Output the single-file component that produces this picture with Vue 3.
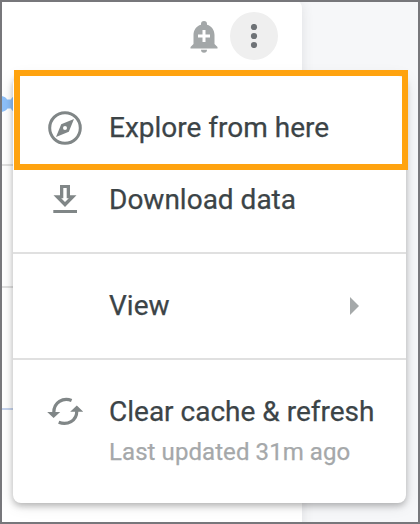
<script setup>
import { ref } from 'vue'

const lastUpdated = ref('31m ago')
const gridLines = ref(['grey', 'grey', 'blue'])
</script>

<template>
  <div class="page">
    <div class="card">
      <div class="toolbar">
        <svg class="bell" viewBox="0 0 28 32">
          <path d="M14 0a3 3 0 0 1 3 3v.7c4.700 1.300 7.500 5.200 7.500 10.300v9l3 3v1.500H.5V26l3-3v-9C3.500 8.900 6.300 5 11 3.700V3a3 3 0 0 1 3-3z" />
          <path d="M11 28.700h6a3 3 0 0 1-6 0z" />
          <path class="plus" d="M12.500 9h3v4.500H20v3h-4.500V21h-3v-4.500H8v-3h4.500z" />
        </svg>
        <button class="more">
          <svg width="24" height="24" viewBox="0 0 24 24">
            <circle cx="12" cy="3" r="3.100" />
            <circle cx="12" cy="12" r="3.100" />
            <circle cx="12" cy="21" r="3.100" />
          </svg>
        </button>
      </div>
      <div class="chart">
        <svg class="series" width="14" height="18" viewBox="0 0 14 18">
          <path d="M0 1c4 0 6 1.500 7 3.500h4c.8-1.800 1.500-2.500 3-3v15c-1.500-.5-2.200-1.200-3-3H7.500C6 15.500 4 17 0 17z" />
        </svg>
        <div v-for="(line, i) in gridLines" :key="i" class="grid-line" :class="line"></div>
      </div>
    </div>

    <div class="menu">
      <div class="group">
        <div class="item">
          <svg class="icon" viewBox="0 0 36 36">
            <circle cx="18" cy="18" r="15.300" fill="none" stroke="#808687" stroke-width="3" />
            <path fill-rule="evenodd" d="M27 9l-5.200 12.800L9 27l5.200-12.800zM18 16a2 2 0 1 0 0 4 2 2 0 0 0 0-4z" />
          </svg>
          <span class="label">Explore from here</span>
        </div>
        <div class="item">
          <svg class="icon" viewBox="0 0 36 36">
            <path fill-rule="evenodd" d="M13 3h10v10.300h6.500L18 25 6.500 13.300H13zM16.300 6v10.300h-2.100L18 20l3.800-3.700h-2.100V6z" />
            <path d="M6.300 28h23.700v3H6.300z" />
          </svg>
          <span class="label">Download data</span>
        </div>
      </div>
      <div class="group">
        <div class="item">
          <span class="icon"></span>
          <span class="label">View</span>
          <svg class="arrow" width="9" height="18" viewBox="0 0 9 18">
            <path d="M0 0l9 9-9 9z" />
          </svg>
        </div>
      </div>
      <div class="group last">
        <div class="item">
          <svg class="icon" viewBox="0 0 36 36">
            <path class="arc" d="M24.600 6.500C16 3 6.800 8.500 6.800 18.500" />
            <path class="arc" d="M11.700 28.300C20.500 31.500 29.800 27 29.800 17" />
            <path d="M.2 18h13L6.600 24zM23.200 17.700h13L29.800 11.600z" />
          </svg>
          <span class="label">Clear cache &amp; refresh</span>
        </div>
        <div class="updated">Last updated {{ lastUpdated }}</div>
      </div>
    </div>

    <div class="highlight"></div>
    <div class="frame"></div>
  </div>
</template>

<style>
body {
  margin: 0;
}
</style>

<style scoped>
.page {
  position: relative;
  width: 420px;
  height: 524px;
  box-sizing: border-box;
  overflow: hidden;
  background: #f6f7f9;
  font-family: Roboto, Arial, sans-serif;
}
.card {
  width: 302px;
  height: 540px;
  padding-top: 2px;
  box-sizing: border-box;
  background: #fff;
  border-radius: 0 8px 0 0;
  box-shadow: 0 2px 12px rgba(60, 64, 67, 0.13);
}
.toolbar {
  display: flex;
  justify-content: flex-end;
  align-items: center;
  padding: 10px 24px 0 0;
}
.bell {
  width: 28px;
  height: 32px;
  margin: 2px 12px 0 0;
  fill: #a3a7a8;
}
.plus {
  fill: #fff;
}
.more {
  display: flex;
  align-items: center;
  justify-content: center;
  width: 48px;
  height: 48px;
  margin: 0;
  padding: 0;
  border: none;
  border-radius: 50%;
  background: #efefef;
  fill: #6e7276;
}
.chart {
  padding-top: 35px;
}
.series {
  display: block;
  margin-bottom: 51px;
  fill: #8dc0fa;
}
.grid-line {
  height: 2px;
  margin-bottom: 120px;
  background: #e0e0e0;
}
.grid-line.blue {
  background: #c5d3ed;
}
.menu {
  position: absolute;
  left: 13px;
  top: 76px;
  width: 393px;
  height: 427px;
  background: #fff;
  border-radius: 8px;
  box-shadow: 0 3px 6px rgba(0, 0, 0, 0.24), 0 2px 16px rgba(0, 0, 0, 0.1);
}
.group {
  padding: 16px 0;
  border-bottom: 2px solid #e0e0e0;
}
.group.last {
  border-bottom: none;
}
.item {
  display: flex;
  align-items: center;
  height: 72px;
  padding: 0 47px 0 34px;
}
.icon {
  width: 36px;
  height: 36px;
  margin-right: 26px;
  flex: none;
  fill: #808687;
}
.arc {
  fill: none;
  stroke: #808687;
  stroke-width: 3.2;
}
.label {
  flex: 1;
  font-size: 28px;
  line-height: 36px;
  color: #3c4447;
  -webkit-text-stroke: 0.25px #3c4447;
  white-space: nowrap;
}
.arrow {
  fill: #a5a9aa;
}
.updated {
  margin-top: -12px;
  padding-left: 96px;
  font-size: 24px;
  line-height: 32px;
  letter-spacing: 0.08px;
  color: #a5a8aa;
  -webkit-text-stroke: 0.25px #a5a8aa;
}
.highlight {
  position: absolute;
  left: 14px;
  top: 70px;
  width: 394px;
  height: 100px;
  box-sizing: border-box;
  border: 6px solid #ffa30f;
}
.frame {
  position: absolute;
  inset: 0;
  border: 2px solid #77777b;
}
</style>
